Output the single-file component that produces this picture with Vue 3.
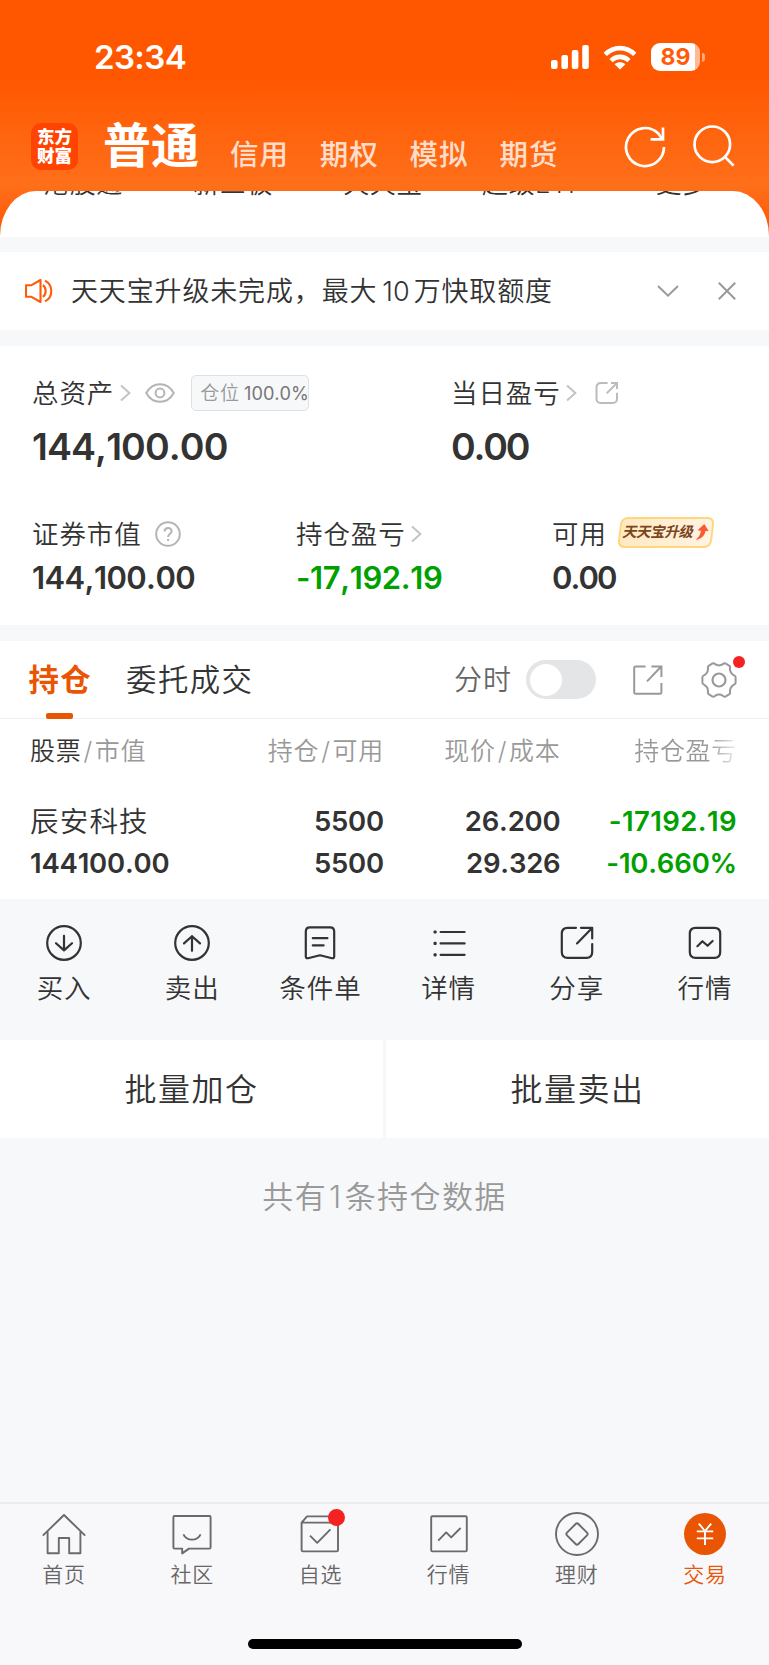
<template>
  <div class="page">
    <header class="header">
      <div class="status-bar">
        <span class="time">23:34</span>
        <div class="status-icons">
          <svg class="signal" viewBox="0 0 38 24" fill="#fff">
            <rect x="0" y="15" width="6.6" height="9" rx="2" />
            <rect x="10.4" y="10" width="6.6" height="14" rx="2" />
            <rect x="20.8" y="5" width="6.6" height="19" rx="2" />
            <rect x="31.2" y="0" width="6.6" height="24" rx="2" />
          </svg>
          <svg class="wifi" viewBox="0 0 34 25">
            <g fill="none" stroke="#fff" stroke-width="4.6">
              <path d="M2.2 9.4C10.8 1 23.2 1 31.8 9.4" />
              <path d="M8 15.6C13.4 10.6 20.6 10.6 26 15.6" />
            </g>
            <path d="M17 24.4L11.6 19.2C14.8 16.6 19.2 16.6 22.4 19.2Z" fill="#fff" />
          </svg>
          <div class="battery"><span>89</span></div>
          <i class="battery-tip"></i>
        </div>
      </div>
      <div class="account-bar">
        <div class="logo"><span>东方</span><span>财富</span></div>
        <span class="account-active">普通</span>
        <span v-for="item in accounts" :key="item" class="account">{{ item }}</span>
        <svg class="refresh" viewBox="0 0 42 42" fill="none" stroke="#fff" stroke-width="2.7">
          <path d="M40 21A19 19 0 1 1 34 7.2L38.4 13" />
          <path d="M39 1.4V13.4H26.6" />
        </svg>
        <svg class="search" viewBox="0 0 42 42" fill="none" stroke="#fff" stroke-width="2.7">
          <circle cx="19.3" cy="19.3" r="17.8" />
          <path d="M31.8 31.8L40.6 40.6" />
        </svg>
      </div>
      <div class="sheet">
        <div class="shortcuts">
          <span v-for="item in shortcuts" :key="item">{{ item }}</span>
        </div>
      </div>
    </header>

    <section class="notice">
      <svg class="horn" viewBox="0 0 28 24" fill="none" stroke="#ff5a0a" stroke-width="2.1" stroke-linejoin="round">
        <path d="M1 6.2H6.5L15.5 1V23L6.5 17.8H1Z" />
        <path d="M17.8 6.2C21.6 8.6 21.6 15.4 17.8 17.8" />
        <path d="M20 1.6C28.4 5.8 28.4 18.2 20 22.4" />
      </svg>
      <p class="notice-text">天天宝升级未完成，最大<b>10</b>万快取额度</p>
      <svg class="arrow-down" viewBox="0 0 22 12" fill="none" stroke="#999" stroke-width="2">
        <path d="M1 1L11 10.6L21 1" />
      </svg>
      <svg class="close" viewBox="0 0 18 18" fill="none" stroke="#999" stroke-width="2">
        <path d="M.8 .8L17.2 17.2M17.2 .8L.8 17.2" />
      </svg>
    </section>

    <section class="assets">
      <div class="asset-row">
        <div class="asset total">
          <div class="label">
            <span>总资产</span>
            <svg class="chevron" viewBox="0 0 11 18"><path d="M1 1.4L9.4 9L1 16.6" /></svg>
            <svg class="eye" viewBox="0 0 30 20">
              <path d="M1.2 10C8 -1.8 22 -1.8 28.8 10C22 21.8 8 21.8 1.2 10Z" />
              <circle cx="15" cy="10" r="4.4" />
            </svg>
            <div class="position">仓位<em>100.0%</em></div>
          </div>
          <div class="value big">144,100.00</div>
        </div>
        <div class="asset">
          <div class="label">
            <span>当日盈亏</span>
            <svg class="chevron" viewBox="0 0 11 18"><path d="M1 1.4L9.4 9L1 16.6" /></svg>
            <svg class="share-small" viewBox="0 0 24 24">
              <path d="M12.6 2H5.5A4 4 0 0 0 1.5 6V18A4 4 0 0 0 5.5 22H18A4 4 0 0 0 22 18V11.8" />
              <path d="M16 2H22V8M22 2L11.6 12.4" />
            </svg>
          </div>
          <div class="value big zero">0.00</div>
        </div>
      </div>
      <div class="asset-row second">
        <div class="asset market">
          <div class="label">
            <span>证券市值</span>
            <svg class="help" viewBox="0 0 26 26">
              <circle cx="13" cy="13" r="11.8" />
              <path d="M9.6 10.4C9.6 5.8 16.6 5.8 16.6 10.2C16.6 12.8 13.1 12.8 13.1 16M13.1 18V20" />
            </svg>
          </div>
          <div class="value">144,100.00</div>
        </div>
        <div class="asset profit">
          <div class="label">
            <span>持仓盈亏</span>
            <svg class="chevron" viewBox="0 0 11 18"><path d="M1 1.4L9.4 9L1 16.6" /></svg>
          </div>
          <div class="value green">-17,192.19</div>
        </div>
        <div class="asset">
          <div class="label">
            <span>可用</span>
            <div class="upgrade">
              <span>天天宝升级</span>
              <svg viewBox="0 0 14 18">
                <path d="M7.8 .4L13.4 8L10 7.8C9.8 12.8 6.4 16.6 .6 17.4C3.6 14.4 5.2 11.6 5 7.6L1.4 7.2Z" fill="#fa5a32" />
              </svg>
            </div>
          </div>
          <div class="value zero">0.00</div>
        </div>
      </div>
    </section>

    <section class="holdings">
      <div class="tabs">
        <span class="tab active">持仓</span>
        <span class="tab">委托成交</span>
        <span class="minute">分时</span>
        <div class="switch" :class="{ on: minuteOn }" @click="minuteOn = !minuteOn"><i></i></div>
        <svg class="share" viewBox="0 0 30 30" fill="none" stroke="#999" stroke-width="2">
          <path d="M12.6 1.4H2.6Q1.2 1.4 1.2 2.8V27.4Q1.2 28.8 2.6 28.8H27Q28.4 28.8 28.4 27.4V18" />
          <path d="M18.4 1.4H28.4V12M28 1.8L14 16.4" />
        </svg>
        <div class="setting">
          <svg viewBox="0 0 36 36" fill="none" stroke="#999" stroke-width="2" stroke-linejoin="round">
            <path d="M11.6 1.4Q13 1 14 2.2Q18 4.6 22 2.2Q23 1 24.4 1.4L28.4 3.8Q29.4 4.6 29 6Q28.6 10.8 33 13.4Q34.6 13.8 34.6 15.2V20.8Q34.6 22.2 33 22.6Q28.6 25.2 29 30Q29.4 31.4 28.4 32.2L24.4 34.6Q23 35 22 33.8Q18 31.4 14 33.8Q13 35 11.6 34.6L7.6 32.2Q6.6 31.4 7 30Q7.4 25.2 3 22.6Q1.4 22.2 1.4 20.8V15.2Q1.4 13.8 3 13.4Q7.4 10.8 7 6Q6.6 4.6 7.6 3.8Z" />
            <circle cx="18" cy="18" r="6.5" stroke-width="2.2" />
          </svg>
          <i class="dot"></i>
        </div>
      </div>
      <div class="row head">
        <span class="c1"><b>股票</b><s>/</s>市值</span>
        <span class="c2">持仓<s>/</s>可用</span>
        <span class="c3">现价<s>/</s>成本</span>
        <span class="c4 fade">持仓盈亏</span>
      </div>
      <div v-for="stock in stocks" :key="stock.name" class="stock">
        <div class="row">
          <span class="c1 name">{{ stock.name }}</span>
          <span class="c2">{{ stock.amount }}</span>
          <span class="c3">{{ stock.price }}</span>
          <span class="c4 green wide">{{ stock.profit }}</span>
        </div>
        <div class="row">
          <span class="c1">{{ stock.value }}</span>
          <span class="c2">{{ stock.available }}</span>
          <span class="c3">{{ stock.cost }}</span>
          <span class="c4 green">{{ stock.rate }}</span>
        </div>
      </div>
    </section>

    <div class="actions">
      <div v-for="item in actions" :key="item.text" class="action">
        <svg viewBox="0 0 36 36">
          <path v-for="d in item.paths" :key="d" :d="d" />
        </svg>
        <span>{{ item.text }}</span>
      </div>
    </div>

    <div class="batch">
      <button>批量加仓</button>
      <button>批量卖出</button>
    </div>
    <p class="count">共有<span>1</span>条持仓数据</p>

    <footer class="footer">
      <nav class="nav">
        <div v-for="item in navs" :key="item.text" class="nav-item" :class="{ active: item.active }">
          <svg viewBox="0 0 44 44">
            <circle v-if="item.active" cx="22" cy="22" r="21" class="disc" />
            <path v-for="d in item.paths" :key="d" :d="d" />
          </svg>
          <i v-if="item.dot" class="nav-dot"></i>
          <span>{{ item.text }}</span>
        </div>
      </nav>
      <div class="home-bar"></div>
    </footer>
  </div>
</template>

<script setup>
import { ref } from 'vue'

const minuteOn = ref(false)

const accounts = ['信用', '期权', '模拟', '期货']
const shortcuts = ['港股通', '新三板', '天天宝', '超级ETF', '更多']

const stocks = [
  {
    name: '辰安科技',
    value: '144100.00',
    amount: '5500',
    available: '5500',
    price: '26.200',
    cost: '29.326',
    profit: '-17192.19',
    rate: '-10.660%'
  }
]

const ring = 'M18 1.2A16.8 16.8 0 1 1 18 34.8A16.8 16.8 0 1 1 18 1.2Z'
const actions = [
  { text: '买入', paths: [ring, 'M18 10.8V25.4M10 18.2L18 25.4L26 18.2'] },
  { text: '卖出', paths: [ring, 'M18 25.8V11.2M10 18.4L18 11.2L26 18.4'] },
  {
    text: '条件单',
    paths: [
      'M8 2.4H28Q32.2 2.4 32.2 6.6V31.6Q32.2 33.6 30 33.2L18 30.2L6 33.2Q3.8 33.6 3.8 31.6V6.6Q3.8 2.4 8 2.4Z',
      'M10.8 13.2H25.4M10.8 20.4H21.6'
    ]
  },
  {
    text: '详情',
    paths: [
      'M9.6 7H33.6M9.6 18.4H33.6M9.6 29.8H33.6',
      'M3.6 6.5H4.6V7.5H3.6ZM3.6 17.9H4.6V18.9H3.6ZM3.6 29.3H4.6V30.3H3.6Z'
    ]
  },
  {
    text: '分享',
    paths: [
      'M17 2.8H8.6Q2.8 2.8 2.8 8.6V27Q2.8 32.8 8.6 32.8H27.4Q33.2 32.8 33.2 27V19',
      'M22 2.8H33.2V13.4M32.6 3.4L18 18.4'
    ]
  },
  {
    text: '行情',
    paths: [
      'M8.6 2.8H27.4Q33.2 2.8 33.2 8.6V27Q33.2 32.8 27.4 32.8H8.6Q2.8 32.8 2.8 27V8.6Q2.8 2.8 8.6 2.8Z',
      'M10.4 21.2L15.4 16.2L20.6 20.8L25.6 16'
    ]
  }
]

const navs = [
  {
    text: '首页',
    paths: ['M.8 23.6L22 3L43.2 23.6', 'M5.6 19.6V41.2H16.8V26H27.2V41.2H38.4V19.6']
  },
  {
    text: '社区',
    paths: [
      'M4.6 4H39.4Q40.6 4 40.6 5.2V35.4Q40.6 36.6 39.4 36.6H19L12.2 41.4V36.6H4.6Q3.4 36.6 3.4 35.4V5.2Q3.4 4 4.6 4Z',
      'M13.4 22.4C16.6 29.4 27.4 29.4 30.6 22.4'
    ]
  },
  {
    text: '自选',
    dot: true,
    paths: [
      'M3.6 10.6H40V38Q40 39.4 38.6 39.4H5Q3.6 39.4 3.6 38ZM3.6 10.6L9 4.4H34.6L40 10.6',
      'M12 23.6L19.2 30.8L32.4 17.4'
    ]
  },
  {
    text: '行情',
    paths: [
      'M5.4 4.2H38.6Q39.8 4.2 39.8 5.4V38.2Q39.8 39.4 38.6 39.4H5.4Q4.2 39.4 4.2 38.2V5.4Q4.2 4.2 5.4 4.2Z',
      'M11.2 28.6L19.2 20.4L24.2 25.4L33.6 16'
    ]
  },
  {
    text: '理财',
    paths: [
      'M22 1A21 21 0 1 1 22 43A21 21 0 1 1 22 1Z',
      'M20.6 12Q22 10.6 23.4 12L32 20.6Q33.4 22 32 23.4L23.4 32Q22 33.4 20.6 32L12 23.4Q10.6 22 12 20.6Z'
    ]
  },
  {
    text: '交易',
    active: true,
    paths: ['M15.8 11.6L22 19L28.2 11.6M13.8 19.4H30.2M13.8 26.4H30.2M22 19V33']
  }
]
</script>

<style>
body {
  background: #f7f8fa;
}
</style>

<style scoped>
.page {
  display: flex;
  flex-direction: column;
  width: 769px;
  height: 1665px;
  overflow: hidden;
  background: #f7f8fa;
  color: #333;
  font-family: Inter, 'Noto Sans CJK SC', sans-serif;
  font-size: 26.5px;
  font-weight: 350;
  font-kerning: none;
  line-height: 1.3;
}

svg {
  display: block;
  flex: none;
}

span,
p {
  white-space: nowrap;
}

.header {
  height: 237px;
  background: linear-gradient(180deg, #ff5700 0, #ff5700 75px, #ff6f1a 185px, #ff6412 205px, #ff5700 232px);
}

.status-bar {
  display: flex;
  justify-content: space-between;
  align-items: center;
  box-sizing: border-box;
  height: 114px;
  padding: 0 64px 0 94px;
}

.time {
  color: #fff;
  font-size: 33px;
  font-weight: 600;
  letter-spacing: -0.6px;
}

.status-icons {
  display: flex;
  align-items: center;
}

.signal {
  width: 38px;
  height: 24px;
}

.wifi {
  width: 34px;
  height: 25px;
  margin: 0 14px;
}

.battery {
  width: 49px;
  height: 28px;
  border-radius: 9px;
  background: linear-gradient(90deg, #fff 44px, #ffb993 44px);
  color: #ff5c0a;
  font-size: 23px;
  font-weight: 700;
  line-height: 28px;
  text-align: center;
}

.battery-tip {
  width: 3px;
  height: 9px;
  margin-left: 2px;
  border-radius: 0 4px 4px 0;
  background: #ffa778;
}

.account-bar {
  display: flex;
  align-items: center;
  height: 64px;
  padding: 0 34.5px 0 31px;
  color: #fff;
}

.logo {
  display: flex;
  flex-direction: column;
  justify-content: center;
  align-items: center;
  width: 47px;
  height: 47px;
  border-radius: 10px;
  background: #ff4300;
  font-size: 17.5px;
  font-weight: 900;
  line-height: 19px;
}

.account-active {
  margin: 0 31px 0 25px;
  font-size: 48px;
  font-weight: 700;
  line-height: 66px;
}

.account {
  width: 89.8px;
  padding-top: 17px;
  color: rgba(255, 255, 255, 0.8);
  font-size: 28.5px;
  font-weight: 500;
  letter-spacing: 1px;
}

.refresh {
  width: 42px;
  height: 42px;
  margin: 2px 26.4px 0 auto;
}

.search {
  width: 42px;
  height: 42px;
}

.sheet {
  box-sizing: border-box;
  height: 46px;
  margin-top: 13px;
  overflow: hidden;
  border-radius: 36px 36px 0 0 / 45px 45px 0 0;
  background: #fff;
}

.shortcuts {
  display: flex;
  margin-top: -22px;
  padding-left: 8px;
  font-size: 26px;
  letter-spacing: 0.5px;
  line-height: 30px;
}

.shortcuts span {
  width: 150px;
  text-align: center;
}

.shortcuts span:last-child {
  width: 148px;
}

.notice {
  display: flex;
  align-items: center;
  height: 78px;
  margin-top: 15px;
  padding: 0 33px 0 25px;
  background: #fff;
}

.horn {
  width: 28px;
  height: 24px;
}

.notice-text {
  flex: 1;
  margin: 2px 0 0 18px;
  font-size: 27px;
  letter-spacing: 0.85px;
}

.notice-text b {
  margin: 0 4px 0 5px;
  font-weight: 350;
  letter-spacing: 0;
}

.arrow-down {
  width: 22px;
  height: 12px;
  margin-right: 39px;
}

.close {
  width: 18px;
  height: 18px;
}

.assets {
  box-sizing: border-box;
  height: 279px;
  margin-top: 16px;
  padding: 27px 32px 0;
  background: #fff;
}

.asset-row {
  display: flex;
}

.asset-row.second {
  margin-top: 43px;
}

.total {
  width: 419px;
}

.market {
  width: 264px;
}

.profit {
  width: 256px;
}

.label {
  display: flex;
  align-items: center;
  height: 40px;
  letter-spacing: 0.9px;
}

.chevron {
  width: 11px;
  height: 18px;
  margin-left: 5.5px;
  fill: none;
  stroke: #c4c4c4;
  stroke-width: 2;
}

.eye {
  width: 30px;
  height: 20px;
  margin-left: 14.5px;
  fill: none;
  stroke: #b4b4b4;
  stroke-width: 2;
}

.position {
  box-sizing: border-box;
  width: 118px;
  height: 36px;
  margin-left: 16px;
  padding-left: 8px;
  border: 1px solid #dfe0e4;
  border-radius: 5px;
  background: #f7f8fa;
  color: #999;
  font-size: 19px;
  line-height: 35px;
  white-space: nowrap;
}

.position em {
  margin-left: 4px;
  color: #777;
  font-size: 18.2px;
  font-style: normal;
  font-weight: 400;
  letter-spacing: 0;
}

.share-small {
  width: 24px;
  height: 24px;
  margin-left: 17.5px;
  fill: none;
  stroke: #bcbcbc;
  stroke-width: 2;
}

.help {
  width: 26px;
  height: 26px;
  margin-left: 13px;
  fill: none;
  stroke: #b4b4b4;
  stroke-width: 2;
}

.value {
  height: 46px;
  font-size: 31px;
  font-weight: 600;
  letter-spacing: -0.6px;
  line-height: 47px;
}

.value.green {
  letter-spacing: -0.4px;
}

.value.zero {
  letter-spacing: -1.9px;
}

.value.big {
  box-sizing: border-box;
  height: 58px;
  padding-top: 5px;
  font-size: 37.5px;
  letter-spacing: -0.9px;
  line-height: 58px;
}

.value.big.zero {
  letter-spacing: -2.2px;
}

.green {
  color: #00a000;
}

.upgrade {
  display: flex;
  align-items: center;
  justify-content: center;
  box-sizing: border-box;
  width: 94px;
  height: 31px;
  margin: -3px 0 0 12.5px;
  border: 2px solid #ffd67c;
  border-radius: 7px;
  background: linear-gradient(90deg, #ffe9c2, #fff3e2);
  color: #7c451c;
  font-size: 14.5px;
  font-weight: 700;
  letter-spacing: -0.4px;
  transform: skewX(-7deg);
}

.upgrade svg {
  width: 13px;
  height: 18px;
  margin: -2px 0 0 2px;
}

.upgrade span {
  transform: skewX(-7deg);
}

.holdings {
  box-sizing: border-box;
  height: 258px;
  margin-top: 16px;
  background: #fff;
}

.tabs {
  display: flex;
  align-items: center;
  box-sizing: border-box;
  height: 78px;
  padding: 0 32px 0 28.5px;
  border-bottom: 1px solid #f0f0f2;
}

.tab {
  padding-top: 2px;
  margin-right: 34px;
  font-size: 30.4px;
  letter-spacing: 1.4px;
  line-height: 77px;
}

.tab.active {
  position: relative;
  color: #ea5504;
  font-weight: 700;
}

.tab.active::after {
  content: '';
  position: absolute;
  bottom: 0;
  left: 17.5px;
  width: 27px;
  height: 6px;
  border-radius: 2px;
  background: #ea5504;
}

.minute {
  margin-left: auto;
  padding-top: 2px;
  color: #666;
  font-size: 28px;
  letter-spacing: 1px;
}

.switch {
  box-sizing: border-box;
  width: 70px;
  height: 39px;
  margin-left: 14px;
  padding: 3.5px;
  border-radius: 20px;
  background: #e4e5e7;
}

.switch.on {
  background: #ea5504;
}

.switch i {
  display: block;
  width: 32px;
  height: 32px;
  border-radius: 50%;
  background: #fff;
}

.switch.on i {
  margin-left: auto;
}

.share {
  width: 30px;
  height: 30px;
  margin-left: 37px;
}

.setting {
  position: relative;
  width: 36px;
  height: 36px;
  margin-left: 38px;
}

.dot {
  position: absolute;
  top: -6px;
  right: -8px;
  width: 12px;
  height: 12px;
  border-radius: 50%;
  background: #f52222;
}

.row {
  display: flex;
  height: 42px;
  padding: 0 32px 0 30px;
  font-size: 27.5px;
  font-weight: 600;
  letter-spacing: -0.2px;
  line-height: 42px;
}

.row span {
  text-align: right;
}

.row .c1 {
  width: 176px;
  text-align: left;
}

.c2 {
  width: 178px;
}

.c3 {
  width: 176.5px;
}

.c4 {
  width: 176.5px;
}

.wide {
  letter-spacing: 0.4px;
}

.row.head {
  height: 64px;
  color: #999;
  font-size: 25px;
  font-weight: 350;
  letter-spacing: 0.7px;
  line-height: 65px;
}

.head b {
  color: #333;
  font-weight: 350;
}

.head s {
  margin: 0 2px;
  text-decoration: none;
}

.head .fade {
  background: linear-gradient(90deg, #999 148px, #f2f2f2 177px);
  background-clip: text;
  color: transparent;
}

.stock {
  padding-top: 17px;
}

.row .name {
  font-size: 28.5px;
  font-weight: 350;
  letter-spacing: 1.2px;
  line-height: 44px;
}

.actions {
  display: flex;
  height: 141px;
}

.action {
  display: flex;
  flex: 1;
  flex-direction: column;
  align-items: center;
  padding-top: 26px;
  letter-spacing: 0.9px;
  line-height: 40px;
}

.action svg {
  width: 36px;
  height: 36px;
  margin-bottom: 7px;
  fill: none;
  stroke: #333;
  stroke-width: 2.2;
  stroke-linecap: round;
  stroke-linejoin: round;
}

.batch {
  display: flex;
  gap: 3px;
  height: 98px;
}

.batch button {
  flex: 1;
  padding: 2px 0 0;
  border: 0;
  background: #fff;
  color: #333;
  font-family: inherit;
  font-size: 32px;
  font-weight: inherit;
  letter-spacing: 1.5px;
  line-height: 96px;
}

.count {
  margin: 38px 0 0;
  color: #999;
  font-size: 31px;
  letter-spacing: 1.4px;
  line-height: 41px;
  text-align: center;
}

.count span {
  margin: 0 2px;
}

.footer {
  display: flex;
  flex-direction: column;
  align-items: center;
  box-sizing: border-box;
  height: 163px;
  margin-top: auto;
  border-top: 2px solid #ececef;
  background: #f8f8fb;
}

.nav {
  display: flex;
  width: 100%;
  height: 135px;
}

.nav-item {
  position: relative;
  display: flex;
  flex: 1;
  flex-direction: column;
  align-items: center;
  padding-top: 8px;
  color: #666;
  font-size: 21px;
  letter-spacing: 0.8px;
  line-height: 30px;
}

.nav-item svg {
  width: 44px;
  height: 44px;
  margin-bottom: 4px;
  fill: none;
  stroke: #6a6a6a;
  stroke-width: 1.9;
  stroke-linejoin: round;
}

.nav-item.active {
  color: #ea5504;
}

.nav-item.active svg {
  stroke: #fff;
}

.nav-item .disc {
  fill: #ea5504;
  stroke: none;
}

.nav-dot {
  position: absolute;
  top: 5px;
  left: 72px;
  width: 17px;
  height: 17px;
  border-radius: 50%;
  background: #f52222;
}

.home-bar {
  width: 274px;
  height: 10px;
  border-radius: 5px;
  background: #000;
}
</style>
